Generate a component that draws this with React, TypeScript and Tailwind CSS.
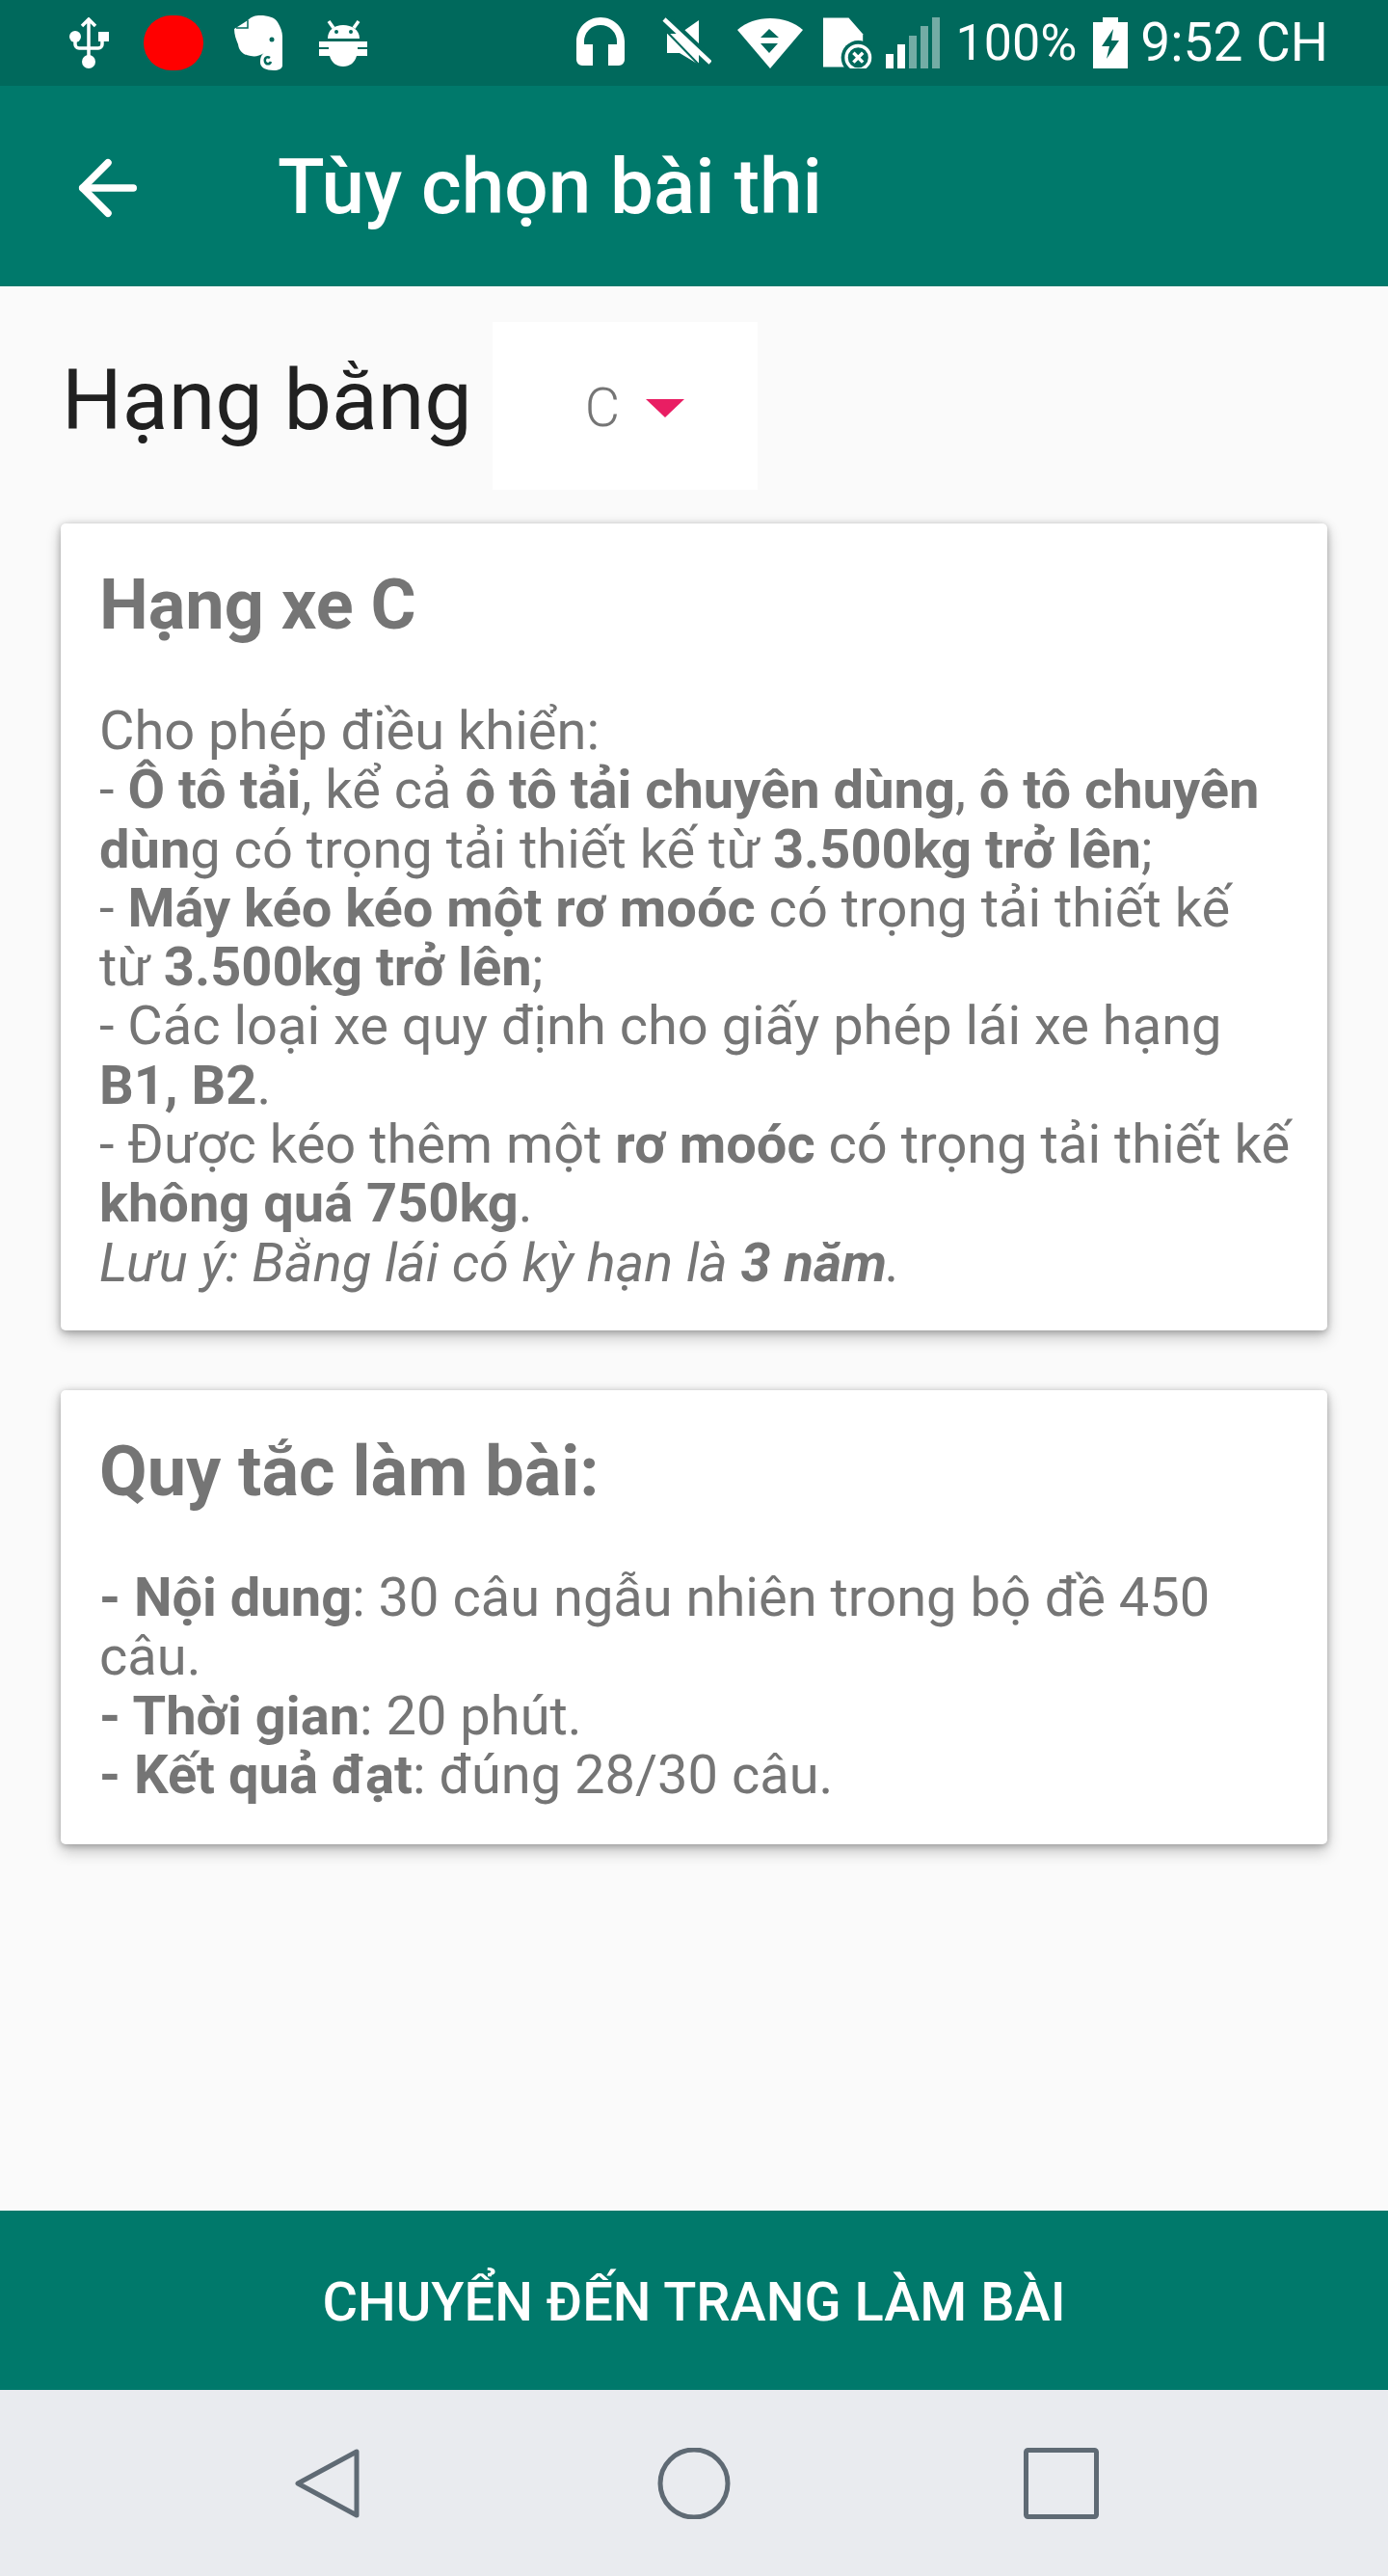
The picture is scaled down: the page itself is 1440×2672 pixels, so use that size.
import { ArrowLeft } from 'lucide-react'

const BAR = '#00695c'

// status bar glyphs, each drawn at its pixel size
function Usb() {
  return (
    <svg viewBox="0 0 41 53" className="h-[53px] w-[41px]">
      <g fill="none" stroke="#fff" strokeWidth="3.5">
        <path d="M20 2v44M13 9l7-7 7 7" />
        <path d="M6 20v8a4 4 0 0 0 4 4h20a4 4 0 0 0 4-4v-6" />
      </g>
      <circle cx="6" cy="20" r="6" fill="#fff" />
      <rect x="30" y="15" width="11" height="10" fill="#fff" />
      <circle cx="20" cy="46" r="7" fill="#fff" />
    </svg>
  )
}

function Evernote() {
  return (
    <svg viewBox="0 0 50 57" className="h-[57px] w-[50px]">
      <path
        fill="#fff"
        d="M14 5C18 1 22 0 27 0c8 0 15 2 18 7 3 5 5 10 5 15v30c0 3-4 5-9 5-8 0-14-3-14-8 0-5 1-8 4-10-5 3-9 4-14 3C9 41 5 37 4 30 2 25 0 20 0 14z"
      />
      <path d="M14 5v8H2" fill="none" stroke={BAR} strokeWidth="1.5" />
      <circle cx="39" cy="25" r="2.5" fill={BAR} />
      <path d="M37 44c-3-2-6 0-5 4 1 3 5 3 6 0" fill="none" stroke={BAR} strokeWidth="2.5" />
    </svg>
  )
}

function AndroidDebug() {
  return (
    <svg viewBox="0 0 50 48" className="h-[48px] w-[50px]">
      <path d="M10 1l5 7M41 1l-5 7" stroke="#fff" strokeWidth="3.5" fill="none" />
      <path d="M9 19C9 10 16 5 25 5s17 5 17 14z" fill="#fff" />
      <circle cx="18" cy="12" r="2" fill={BAR} />
      <circle cx="33" cy="12" r="2" fill={BAR} />
      <path d="M0 22h50v6H40v2h10v7H39c-2 7-7 11-14 11s-12-4-14-11H0v-7h10v-2H0z" fill="#fff" />
    </svg>
  )
}

function Headset() {
  return (
    <svg viewBox="0 0 50 50" className="h-[50px] w-[50px] fill-white">
      <path d="M25 0C11.2 0 0 11.2 0 25v19a6 6 0 0 0 6 6h11V28H8v-3a17 17 0 0 1 34 0v3h-9v22h11a6 6 0 0 0 6-6V25C50 11.2 38.8 0 25 0z" />
    </svg>
  )
}

function Muted() {
  return (
    <svg viewBox="0 0 51 50" className="h-[50px] w-[51px]">
      <path d="M5 17h13L38 3v46L18 37H5z" fill="#fff" />
      <path d="M6 0l46 44" stroke={BAR} strokeWidth="5" />
      <path d="M2 2l48 45" stroke="#fff" strokeWidth="4.5" />
      <path d="M0 10l38 39" stroke={BAR} strokeWidth="2" />
    </svg>
  )
}

function Wifi() {
  return (
    <svg viewBox="0 0 68 52" className="h-[52px] w-[68px]">
      <path d="M34 0C21 0 9 4 0 12l34 40 34-40C59 4 47 0 34 0z" fill="#fff" />
      <path d="M33 11l10 9H24zM24 26h18l-9 10z" fill={BAR} />
    </svg>
  )
}

function SimError() {
  return (
    <svg viewBox="0 0 52 53" className="h-[53px] w-[51px]">
      <path d="M0 0h27l15 17v35H0z" fill="#fff" />
      <circle cx="37" cy="42" r="18" fill={BAR} />
      <circle cx="37" cy="42" r="12.5" fill="none" stroke="#fff" strokeWidth="3.5" />
      <path d="M32 37l10 10M42 37L32 47" stroke="#fff" strokeWidth="3.5" />
    </svg>
  )
}

function Signal() {
  return (
    <svg viewBox="0 0 56 53" className="h-[53px] w-[56px]">
      <rect x="0" y="38" width="8" height="15" fill="#fff" />
      <rect x="12" y="28" width="8" height="25" fill="#fff" />
      <rect x="24" y="19" width="8" height="34" fill="#fff" fillOpacity="0.45" />
      <rect x="36" y="9" width="8" height="44" fill="#fff" fillOpacity="0.45" />
      <rect x="48" y="0" width="8" height="53" fill="#fff" fillOpacity="0.45" />
    </svg>
  )
}

function Battery() {
  return (
    <svg viewBox="0 0 36 53" className="h-[53px] w-[36px]">
      <path d="M10 0h16v5h10v48H0V5h10z" fill="#fff" />
      <path d="M21 12L9 30h8l-3 13 13-19h-8z" fill={BAR} />
    </svg>
  )
}

function StatusBar() {
  return (
    <div className="flex h-[89px] shrink-0 items-center bg-[#00695c] pl-[72px] pr-[62px] text-white">
      <Usb />
      <div className="ml-[36px] h-[57px] w-[62px] rounded-full bg-[#ff0000]" />
      <div className="ml-[32px]">
        <Evernote />
      </div>
      <div className="ml-[38px]">
        <AndroidDebug />
      </div>
      <div className="ml-auto flex items-center">
        <div className="-mt-[3px]">
          <Headset />
        </div>
        <div className="ml-[39px] -mt-[3px]">
          <Muted />
        </div>
        <div className="ml-[27px]">
          <Wifi />
        </div>
        <div className="ml-[21px]">
          <SimError />
        </div>
        <div className="ml-[14px]">
          <Signal />
        </div>
        <span className="ml-[17px] text-[52px] leading-none">100%</span>
        <div className="ml-[17px]">
          <Battery />
        </div>
        <span className="ml-[13px] text-[55px] leading-none">9:52 CH</span>
      </div>
    </div>
  )
}

function CardBody({ children }: { children: React.ReactNode }) {
  return <div className="mt-[62px] text-[56px] leading-[61.3px] text-[#757575]">{children}</div>
}

const cardClass =
  'rounded-[5px] bg-white pl-[40px] pr-[20px] pt-[47px] shadow-[0_8px_16px_rgba(0,0,0,0.2),0_2px_6px_rgba(0,0,0,0.2),0_0_12px_rgba(0,0,0,0.1)]'

export default function App() {
  return (
    <div className="flex h-[2672px] w-[1440px] flex-col bg-[#fafafa] font-['Roboto',sans-serif]">
      <StatusBar />

      <div className="flex h-[208px] shrink-0 items-center bg-[#00796b] text-white">
        <ArrowLeft className="ml-[67px] mt-[3px] h-[90px] w-[90px]" strokeWidth={2} />
        <h1 className="ml-[131px] mt-[2px] text-[80px] font-medium">Tùy chọn bài thi</h1>
      </div>

      <main className="flex-1 px-[63px]">
        <div className="mt-[37px] flex items-center">
          <span className="ml-[1px] pb-[12px] text-[88px] leading-none text-[#212121]">Hạng bằng</span>
          <div className="ml-[21px] flex h-[174px] w-[275px] items-center bg-white pl-[96px]">
            <span className="mt-[4px] text-[56px] font-light text-[#757575]">C</span>
            <span className="ml-[27px] mt-[4px] h-0 w-0 border-x-[20px] border-t-[19px] border-x-transparent border-t-[#e91e63]" />
          </div>
        </div>

        <section className={`mt-[35px] h-[837px] ${cardClass}`}>
          <h2 className="text-[72px] font-bold leading-[76px] text-[#757575]">Hạng xe C</h2>
          <CardBody>
            Cho phép điều khiển:
            <br />- <b>Ô tô tải</b>, kể cả <b>ô tô tải chuyên dùng</b>, <b>ô tô chuyên dùn</b>g có trọng tải thiết kế từ{' '}
            <b>3.500kg trở lên</b>;
            <br />- <b>Máy kéo kéo một rơ moóc</b> có trọng tải thiết kế
            <br />
            từ <b>3.500kg trở lên</b>;
            <br />- Các loại xe quy định cho giấy phép lái xe hạng <b>B1, B2</b>.
            <br />- Được kéo thêm một <b>rơ moóc</b> có trọng tải thiết kế <b>không quá 750kg</b>.
            <br />
            <i>
              Lưu ý: Bằng lái có kỳ hạn là <b>3 năm</b>.
            </i>
          </CardBody>
        </section>

        <section className={`mt-[62px] h-[471px] ${cardClass}`}>
          <h2 className="text-[72px] font-bold leading-[76px] text-[#757575]">Quy tắc làm bài:</h2>
          <CardBody>
            <b>- Nội dung</b>: 30 câu ngẫu nhiên trong bộ đề 450
            <br />
            câu.
            <br />
            <b>- Thời gian</b>: 20 phút.
            <br />
            <b>- Kết quả đạt</b>: đúng 28/30 câu.
          </CardBody>
        </section>
      </main>

      <button className="h-[186px] shrink-0 bg-[#00796b] pt-[4px] text-[56px] font-medium text-white">
        CHUYỂN ĐẾN TRANG LÀM BÀI
      </button>

      {/* system navigation */}
      <div className="flex h-[193px] shrink-0 items-center bg-[#e9ebef]">
        <svg viewBox="0 0 68 74" className="ml-[305px] h-[74px] w-[68px]">
          <path d="M65 4v66L4 37z" fill="none" stroke="#5f6a74" strokeWidth="5" strokeLinejoin="round" />
        </svg>
        <svg viewBox="0 0 78 74" className="ml-[308px] h-[74px] w-[78px]">
          <circle cx="39" cy="37" r="35" fill="none" stroke="#5f6a74" strokeWidth="5" />
        </svg>
        <svg viewBox="0 0 78 74" className="ml-[303px] h-[74px] w-[78px]">
          <rect x="2.5" y="2.5" width="73" height="69" rx="2" fill="none" stroke="#5f6a74" strokeWidth="5" />
        </svg>
      </div>
    </div>
  )
}
